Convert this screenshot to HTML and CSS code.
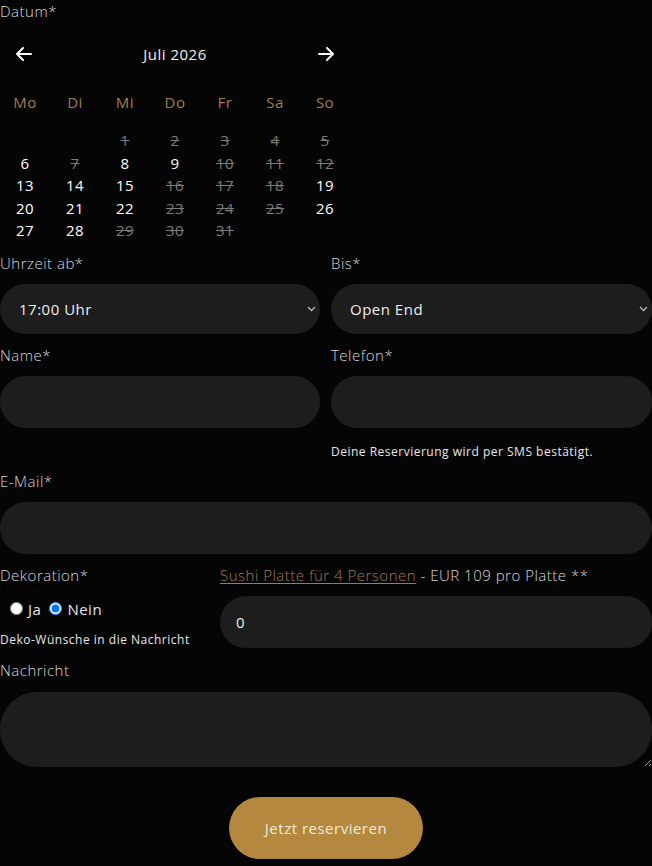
FILE: index.html
```html
<!DOCTYPE html>
<html lang="de">
<head>
<meta charset="utf-8">
<link rel="stylesheet" href="styles.css">
</head>
<body>
<form class="form">
  <div class="field">
    <div class="label">Datum*</div>
    <div class="calendar">
      <div class="cal-head">
        <span class="cal-arrow">
          <svg width="18" height="16" viewBox="0 0 18 16"><path d="M16 8H2M8 2L2 8l6 6" fill="none" stroke="#fff" stroke-width="2" stroke-linecap="round" stroke-linejoin="round"/></svg>
        </span>
        <span class="cal-title">Juli 2026</span>
        <span class="cal-arrow">
          <svg width="18" height="16" viewBox="0 0 18 16"><path d="M2 8h14M10 2l6 6-6 6" fill="none" stroke="#fff" stroke-width="2" stroke-linecap="round" stroke-linejoin="round"/></svg>
        </span>
      </div>
      <div class="cal-grid cal-week">
        <span>Mo</span><span>Di</span><span>Mi</span><span>Do</span><span>Fr</span><span>Sa</span><span>So</span>
      </div>
      <div class="cal-grid cal-days">
        <span></span><span></span>
        <span class="off">1</span><span class="off">2</span><span class="off">3</span><span class="off">4</span><span class="off">5</span>
        <span>6</span><span class="off">7</span><span>8</span><span>9</span><span class="off">10</span><span class="off">11</span><span class="off">12</span>
        <span>13</span><span>14</span><span>15</span><span class="off">16</span><span class="off">17</span><span class="off">18</span><span>19</span>
        <span>20</span><span>21</span><span>22</span><span class="off">23</span><span class="off">24</span><span class="off">25</span><span>26</span>
        <span>27</span><span>28</span><span class="off">29</span><span class="off">30</span><span class="off">31</span>
      </div>
    </div>
  </div>

  <div class="row">
    <div class="field">
      <div class="label">Uhrzeit ab*</div>
      <div class="select">17:00 Uhr
        <svg class="chev" width="9" height="6" viewBox="0 0 9 6"><path d="M1 1l3.5 3.5L8 1" fill="none" stroke="#bbb" stroke-width="1.3"/></svg>
      </div>
    </div>
    <div class="field">
      <div class="label">Bis*</div>
      <div class="select">Open End
        <svg class="chev" width="9" height="6" viewBox="0 0 9 6"><path d="M1 1l3.5 3.5L8 1" fill="none" stroke="#bbb" stroke-width="1.3"/></svg>
      </div>
    </div>
  </div>

  <div class="row">
    <div class="field">
      <div class="label">Name*</div>
      <input class="input" type="text">
    </div>
    <div class="field">
      <div class="label">Telefon*</div>
      <input class="input" type="text">
      <div class="hint hint-sms">Deine Reservierung wird per SMS bestätigt.</div>
    </div>
  </div>

  <div class="field">
    <div class="label">E-Mail*</div>
    <input class="input" type="text">
  </div>

  <div class="row row-deko">
    <div class="field">
      <div class="label">Dekoration*</div>
      <div class="radios">
        <label class="radio"><input type="radio" name="deko"> Ja</label>
        <label class="radio"><input type="radio" name="deko" checked> Nein</label>
      </div>
      <div class="hint">Deko-Wünsche in die Nachricht</div>
    </div>
    <div class="field">
      <div class="label"><a class="link" href="#">Sushi Platte für 4 Personen</a> - EUR 109 pro Platte **</div>
      <input class="input input-num" type="text" value="0">
    </div>
  </div>

  <div class="field field-msg">
    <div class="label">Nachricht</div>
    <textarea class="textarea"></textarea>
  </div>

  <div class="actions">
    <button class="btn" type="button">Jetzt reservieren</button>
  </div>
</form>
</body>
</html>
```
FILE: styles.css
```css
html, body {
  margin: 0;
  padding: 0;
  background: #050505;
}
body {
  font-family: "Open Sans", "DejaVu Sans", sans-serif;
  color: #e6e6e6;
  width: 652px;
  letter-spacing: 0.5px;
}
.form {
  display: flex;
  flex-direction: column;
  gap: 10px;
}
.field {
  display: flex;
  flex-direction: column;
  min-width: 0;
}
.label {
  font-size: 15px;
  font-weight: 300;
  line-height: 22px;
  color: #d6d6d6;
  margin-bottom: 10px;
  white-space: nowrap;
}
.calendar {
  width: 350px;
}
.cal-head {
  display: flex;
  align-items: center;
  justify-content: space-between;
  height: 44px;
  padding: 0 15px;
  margin-top: 0;
}
.cal-arrow {
  display: flex;
  width: 18px;
  height: 16px;
}
.cal-title {
  font-size: 15px;
  color: #f0f0f0;
}
.cal-grid {
  display: grid;
  grid-template-columns: repeat(7, 50px);
  text-align: center;
}
.cal-week {
  margin-top: 11px;
  height: 30px;
  line-height: 30px;
  font-size: 15px;
  color: #a27c45;
}
.cal-days {
  margin-top: 12px;
  grid-auto-rows: 22.5px;
  line-height: 22.5px;
  font-size: 15px;
  color: #fff;
}
.cal-days .off {
  color: #7a7a7a;
  text-decoration: line-through;
}
.row {
  display: grid;
  grid-template-columns: 320px 321px;
  column-gap: 11px;
}
.row-deko {
  grid-template-columns: 210px 432px;
  column-gap: 10px;
}
.select {
  position: relative;
  height: 50px;
  border-radius: 25px;
  background: #1d1d1d;
  font-size: 15px;
  line-height: 50px;
  padding-left: 19px;
  color: #ececec;
}
.chev {
  position: absolute;
  right: 4px;
  top: 22px;
}
.input {
  display: block;
  box-sizing: border-box;
  width: 100%;
  height: 52px;
  border: 0;
  border-radius: 26px;
  background: #1d1d1d;
  padding: 0 16px;
  font-family: inherit;
  font-size: 15px;
  letter-spacing: 0.5px;
  color: #ececec;
  outline: none;
  margin: 0;
}
.hint {
  font-size: 12px;
  line-height: 16px;
  color: #e6e6e6;
}
.hint-sms {
  margin-top: 16px;
}
.radios {
  display: flex;
  gap: 8px;
  height: 22px;
  align-items: center;
  padding-left: 10px;
  margin-top: 2px;
  margin-bottom: 12px;
}
.radio {
  display: flex;
  align-items: center;
  font-size: 15px;
  color: #e6e6e6;
}
.radio input {
  margin: 0 5px 0 0;
  width: 13px;
  height: 13px;
}
.link {
  color: #a27c45;
  text-decoration: underline;
  text-underline-offset: 2px;
}
.field-msg {
  margin-top: 1px;
}
.textarea {
  display: block;
  box-sizing: border-box;
  width: 100%;
  height: 75px;
  border: 0;
  border-radius: 37px;
  background: #1d1d1d;
  padding: 12px 16px;
  font-family: inherit;
  color: #ececec;
  outline: none;
  margin: 1px 0 0;
}
.actions {
  display: flex;
  justify-content: center;
  margin-top: 20px;
}
.btn {
  width: 194px;
  height: 62px;
  border: 0;
  border-radius: 31px;
  background: #b5883f;
  color: #f3ead9;
  font-family: inherit;
  font-size: 15px;
  letter-spacing: 0.5px;
  cursor: pointer;
}
```
